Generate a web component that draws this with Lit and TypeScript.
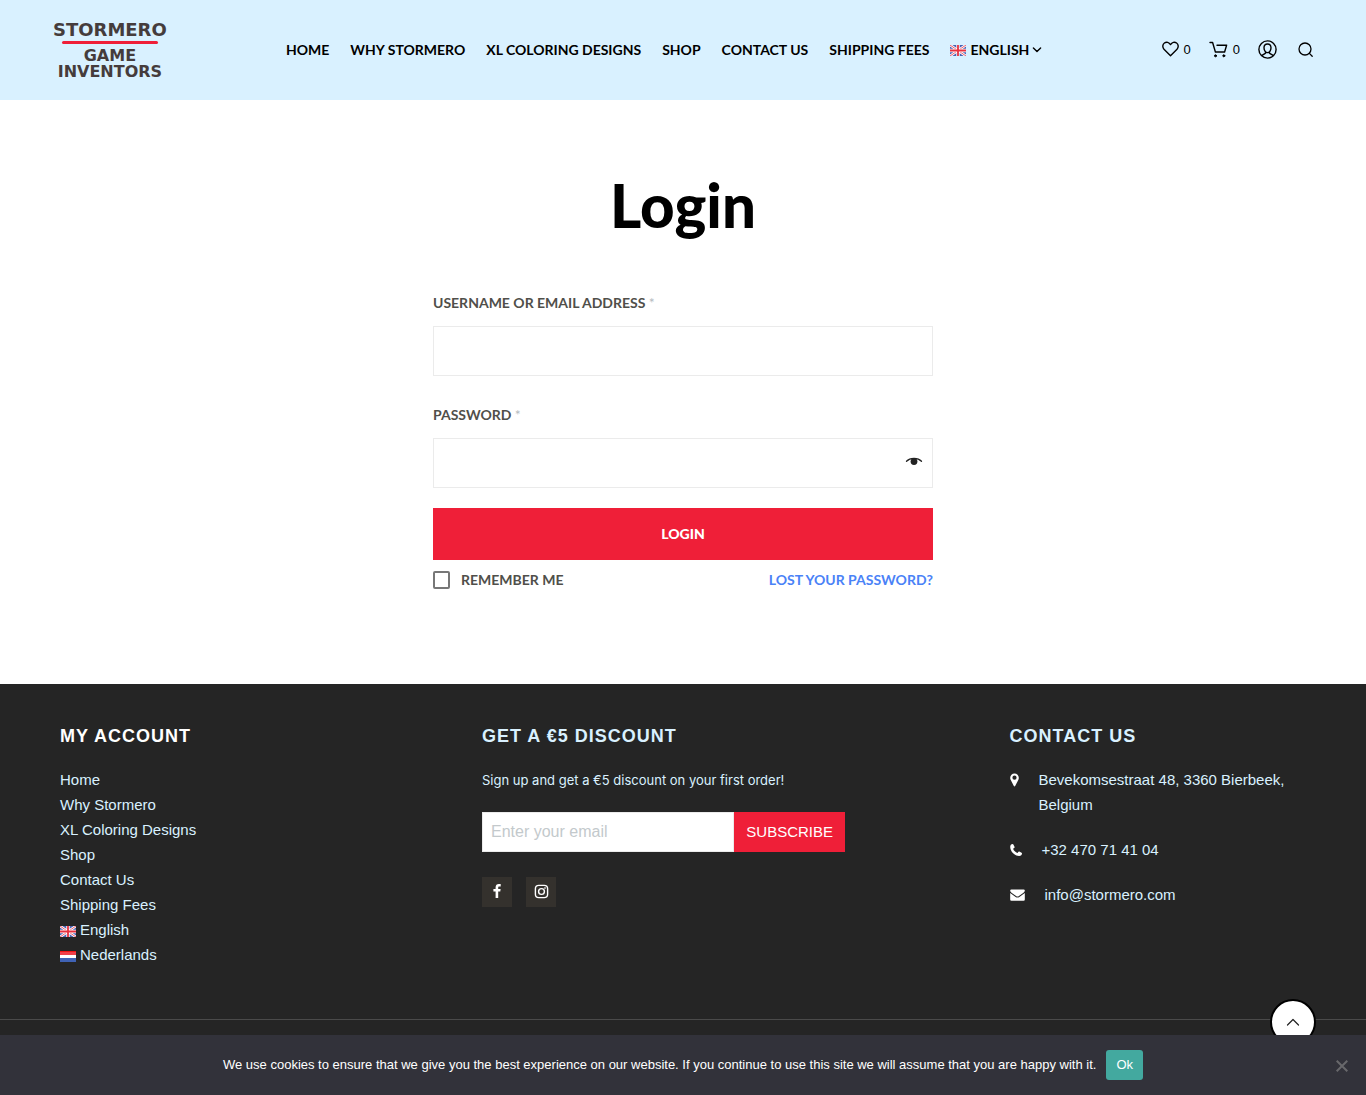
import { LitElement, html, css, svg } from "lit";
import { customElement, state } from "lit/decorators.js";

const flagUk = () => html`<svg class="flag" viewBox="0 0 16 11" aria-hidden="true">
  <rect width="16" height="11" fill="#4a62b4"></rect>
  <path d="M0 0L16 11M16 0L0 11" stroke="#fff" stroke-width="2.6"></path>
  <path d="M0 0L16 11M16 0L0 11" stroke="#ee5a68" stroke-width="1"></path>
  <path d="M8 0V11M0 5.5H16" stroke="#fff" stroke-width="3.4"></path>
  <path d="M8 0V11M0 5.5H16" stroke="#e8303f" stroke-width="1.8"></path>
</svg>`;

const flagNl = () => html`<svg class="flag" viewBox="0 0 16 11" aria-hidden="true">
  <rect width="16" height="11" fill="#fff"></rect>
  <rect width="16" height="4" fill="#f0404a"></rect>
  <rect width="16" height="1" fill="#f01414"></rect>
  <rect y="7" width="16" height="4" fill="#3f62b5"></rect>
</svg>`;

const menu = ["Home", "Why Stormero", "XL Coloring Designs", "Shop", "Contact Us", "Shipping Fees"];

const line = (w: number, h: number, cls: string, body: unknown) => html`<svg
  class=${cls}
  width=${w}
  height=${h}
  viewBox="0 0 ${w} ${h}"
  fill="none"
  stroke="currentColor"
  stroke-linecap="round"
  stroke-linejoin="round"
  aria-hidden="true"
>${body}</svg>`;

@customElement("app-root")
export class AppRoot extends LitElement {
  @state() private showPassword = false;
  @state() private cookieBar = true;

  static styles = css`
    :host {
      display: flex;
      flex-direction: column;
      min-height: 100vh;
      background: #fff;
      color: #000;
      font-family: "Liberation Sans", Arial, sans-serif;
      font-size: 15px;
    }
    * { box-sizing: border-box; }
    a { color: inherit; text-decoration: none; }
    h1, h2, p, ul { margin: 0; padding: 0; }
    ul { list-style: none; }
    svg { display: block; flex: none; }
    button { font: inherit; border: 0; padding: 0; cursor: pointer; background: none; color: inherit; }
    .flag { display: inline-block; width: 16px; height: 11px; vertical-align: -2px; margin-right: 4px; }

    .header {
      display: flex;
      align-items: center;
      justify-content: space-between;
      min-height: 100px;
      padding: 0 53px 2px;
      background: #d9f1ff;
    }
    .logo {
      display: flex;
      flex-direction: column;
      align-items: center;
      padding-top: 4px;
      color: #453c3c;
      font-family: "DejaVu Sans", sans-serif;
      font-size: 16px;
      font-weight: 700;
      line-height: 16px;
    }
    .logo-top { font-size: 18px; }
    .logo-rule { width: 96px; height: 3px; margin: 3px 0 4px; border-radius: 2px; background: #ef1f38; }
    .nav, .tools { display: flex; align-items: center; }
    .nav {
      gap: 21px;
      font-family: Lato, sans-serif;
      font-size: 14px;
      font-weight: 700;
      text-transform: uppercase;
      white-space: nowrap;
    }
    .lang { display: flex; align-items: center; }
    .lang .flag { margin-top: 3px; }
    .lang svg:last-child { margin: 2px 0 0 3px; }
    .tools { gap: 18px; font-size: 13px; }
    .tool { display: flex; align-items: center; gap: 5px; }
    .tool-search { padding-left: 3px; }

    .main { padding: 67px 20px 94px; }
    .title {
      font-family: Lato, sans-serif;
      font-size: 60px;
      line-height: 76px;
      font-weight: 900;
      text-align: center;
    }
    .form { max-width: 500px; margin: 51px auto 0; font-family: Lato, sans-serif; }
    .label {
      display: block;
      margin-bottom: 14px;
      color: #504f4a;
      font-size: 14px;
      line-height: 18px;
      font-weight: 700;
      text-transform: uppercase;
    }
    .req { color: #b5bcbf; font-weight: 400; }
    .field { display: flex; align-items: center; height: 50px; margin-bottom: 30px; border: 1px solid #ebebeb; }
    .field-last { margin-bottom: 20px; }
    .input { flex: 1; min-width: 0; height: 100%; padding: 0 12px; border: 0; outline: 0; background: none; font-size: 16px; }
    .eye { padding: 0 9px 4px; }
    .submit {
      width: 100%;
      height: 52px;
      padding-bottom: 2px;
      background: #ef1f38;
      color: #fff;
      font-size: 14px;
      font-weight: 900;
      text-transform: uppercase;
    }
    .row { display: flex; align-items: center; justify-content: space-between; margin-top: 10px; font-size: 14px; line-height: 20px; font-weight: 700; text-transform: uppercase; }
    .remember { display: flex; align-items: center; gap: 11px; color: #504f4a; }
    .check { appearance: none; width: 17px; height: 18px; margin: 0; border: 2px solid #777; border-radius: 2px; background: #fff; }
    .check:checked { background: #777; }
    .lost { color: #4a82f7; }

    .footer { flex: 1; background: #252525; color: #d9f1ff; padding-bottom: 75px; }
    .cols { display: grid; grid-template-columns: 4fr 5fr 3fr; padding: 39px 50px 52px; border-bottom: 1px solid #4a4a4a; }
    .col { min-width: 0; padding: 0 10px; line-height: 25px; }
    .head { margin-bottom: 18px; font-size: 18px; line-height: 26px; font-weight: 700; letter-spacing: 1px; text-transform: uppercase; }
    .head-white { color: #fff; }
    .promo { font-family: Inter, sans-serif; font-size: 13px; line-height: 27px; }
    .subscribe { display: flex; max-width: 363px; height: 40px; margin: 18px 0 25px; }
    .email { flex: 1; min-width: 0; padding: 0 8px; border: 1px solid #ebebeb; border-radius: 0; outline: 0; font: 16px "Liberation Sans", Arial, sans-serif; }
    .email::placeholder { color: #c3c9cc; opacity: 1; }
    .go { padding: 0 12px 1px; background: #ef1f38; color: #fff; }
    .social { display: flex; gap: 14px; color: #fff; }
    .social a { display: grid; place-items: center; width: 30px; height: 30px; padding-bottom: 2px; background: #34312d; }
    .contact { display: flex; flex-direction: column; gap: 20px; }
    .contact li { display: flex; align-items: flex-start; }
    .contact svg { margin: 6px 20px 0 0; color: #fff; }

    .totop {
      position: fixed;
      right: 50px;
      bottom: 50px;
      display: grid;
      place-items: center;
      width: 46px;
      height: 46px;
      border: 2px solid #000;
      border-radius: 50%;
      background: #fff;
      color: #222;
    }
    .cookie {
      position: fixed;
      inset: auto 0 0 0;
      display: flex;
      align-items: center;
      justify-content: center;
      gap: 10px;
      min-height: 60px;
      padding: 15px 50px;
      background: #32323a;
      color: #fff;
      font-size: 13px;
      line-height: 20px;
    }
    .cookie span { padding-bottom: 1px; }
    .ok { padding: 0 10px 1px; height: 30px; border-radius: 3px; background: #43a99f; }
    .close { position: absolute; right: 18px; top: 25px; color: #68686b; }
  `;

  private heart = line(17, 16, "", svg`<path stroke-width="1.4" d="M8.5 14.7L2 8.2C.2 6.2.5 3.3 2.4 2C4.5.6 7 1.2 8.5 3.6C10 1.2 12.5.6 14.6 2C16.5 3.3 16.8 6.2 15 8.2Z"></path>`);
  private cart = line(19, 17, "", svg`<path stroke-width="1.4" d="M1 1.5H3.6L6.4 11H15.6L17.6 4.2H8"></path><circle cx="6.5" cy="14.8" r="1" fill="currentColor" stroke-width="1"></circle><circle cx="14.8" cy="14.8" r="1" fill="currentColor" stroke-width="1"></circle>`);
  private user = line(19, 19, "", svg`<circle cx="9.5" cy="9.5" r="8.6" stroke-width="1.4"></circle><path stroke-width="1.4" d="M9.5 4C7.2 4 6 5.6 6 7.8S7.4 12.6 9.5 12.6S13 10 13 7.8S11.8 4 9.5 4ZM7.6 12L7.3 13.3L4 15.4M11.4 12L11.7 13.3L15 15.4"></path>`);
  private search = line(15, 15, "", svg`<circle cx="7" cy="7" r="6" stroke-width="1.3"></circle><path stroke-width="1.3" d="M11.4 11.4L14.2 14.2"></path>`);
  private chevron = line(10, 6, "", svg`<path stroke-width="1.4" d="M1.4 1L5 4.6L8.6 1"></path>`);

  render() {
    return html`
      <header class="header">
        <a class="logo" href="#" aria-label="Stormero Game Inventors">
          <span class="logo-top">STORMERO</span>
          <span class="logo-rule"></span>
          <span>GAME</span>
          <span>INVENTORS</span>
        </a>
        <nav class="nav">
          ${menu.map((m) => html`<a href="#">${m}</a>`)}
          <a class="lang" href="#">${flagUk()}English${this.chevron}</a>
        </nav>
        <div class="tools">
          <a class="tool" href="#" aria-label="Wishlist">${this.heart}<span>0</span></a>
          <a class="tool" href="#" aria-label="Cart">${this.cart}<span>0</span></a>
          <a class="tool" href="#" aria-label="Account">${this.user}</a>
          <button class="tool tool-search" aria-label="Search">${this.search}</button>
        </div>
      </header>

      <main class="main">
        <h1 class="title">Login</h1>
        <form class="form" @submit=${(e: Event) => e.preventDefault()}>
          <label class="label" for="user">Username or email address <span class="req">*</span></label>
          <div class="field"><input class="input" id="user" type="text" autocomplete="username" /></div>
          <label class="label" for="pass">Password <span class="req">*</span></label>
          <div class="field field-last">
            <input class="input" id="pass" type=${this.showPassword ? "text" : "password"} autocomplete="current-password" />
            <button class="eye" type="button" aria-label="Show password" @click=${() => (this.showPassword = !this.showPassword)}>
              <svg width="18" height="9" viewBox="0 0 18 9" aria-hidden="true">
                <path d="M1.5 4.2C5 .4 13 .4 16.5 4.2" fill="none" stroke="#222" stroke-width="1.3" stroke-linecap="round"></path>
                <circle cx="9" cy="4.6" r="3.4" fill="#222"></circle>
              </svg>
            </button>
          </div>
          <button class="submit" type="submit">Login</button>
          <div class="row">
            <label class="remember"><input class="check" type="checkbox" />Remember me</label>
            <a class="lost" href="#">Lost your password?</a>
          </div>
        </form>
      </main>

      <footer class="footer">
        <div class="cols">
          <section class="col">
            <h2 class="head head-white">My account</h2>
            <ul>
              ${menu.map((m) => html`<li><a href="#">${m}</a></li>`)}
              <li><a href="#">${flagUk()}English</a></li>
              <li><a href="#">${flagNl()}Nederlands</a></li>
            </ul>
          </section>
          <section class="col">
            <h2 class="head">Get a €5 discount</h2>
            <p class="promo">Sign up and get a €5 discount on your first order!</p>
            <form class="subscribe" @submit=${(e: Event) => e.preventDefault()}>
              <input class="email" type="email" placeholder="Enter your email" aria-label="Email" />
              <button class="go" type="submit">SUBSCRIBE</button>
            </form>
            <div class="social">
              <a href="#" aria-label="Facebook">
                <svg width="8" height="14" viewBox="0 0 8 14" fill="currentColor"><path d="M7.7.1V2.4H6.4C5.4 2.4 5.2 2.9 5.2 3.6V5.1H7.6L7.3 7.5H5.2V14H2.6V7.5H.4V5.1H2.6V3.3C2.6 1.2 3.9 0 5.8 0C6.7 0 7.5 .1 7.7 .1Z"></path></svg>
              </a>
              <a href="#" aria-label="Instagram">
                <svg width="15" height="15" viewBox="0 0 15 15" fill="none" stroke="currentColor" stroke-width="1.4"><rect x="1.4" y="1.4" width="12.2" height="12.2" rx="3.4"></rect><circle cx="7.5" cy="7.5" r="2.9"></circle><circle cx="11" cy="4" r=".5" fill="currentColor" stroke-width=".6"></circle></svg>
              </a>
            </div>
          </section>
          <section class="col">
            <h2 class="head">Contact us</h2>
            <ul class="contact">
              <li>
                <svg width="9" height="14" viewBox="0 0 9 14" fill="currentColor" aria-hidden="true"><path fill-rule="evenodd" d="M4.5 .4A4.3 4.3 0 0 0 .2 4.7C.2 5.3 .3 5.9 .5 6.4L3.7 12.8Q4.5 14 5.3 12.8L8.5 6.4C8.7 5.9 8.8 5.3 8.8 4.7A4.3 4.3 0 0 0 4.5 .4ZM4.5 2.6A2.1 2.1 0 1 1 4.5 6.8A2.1 2.1 0 1 1 4.5 2.6Z"></path></svg>
                <span>Bevekomsestraat 48, 3360 Bierbeek, Belgium</span>
              </li>
              <li>
                <svg width="12" height="14" viewBox="0 0 12 14" fill="currentColor" aria-hidden="true"><path d="M2.6 1.1C1.2 1.2.2 2.3.2 4C.4 8.6 4.6 12.8 9.2 13C10.9 13 11.9 12 12 10.6Q12 10 11.5 9.8L9.3 8.6Q8.8 8.4 8.5 8.8L7.4 10.1C5.5 9.4 3.8 7.7 3.1 5.8L4.4 4.7Q4.8 4.4 4.6 3.9L3.4 1.6Q3.1 1.1 2.6 1.1Z"></path></svg>
                <a href="tel:+32470714104">+32 470 71 41 04</a>
              </li>
              <li>
                <svg width="15" height="14" viewBox="0 0 16 14" fill="currentColor" aria-hidden="true"><path d="M1.5 1H14.5Q15.8 1 15.8 2.3C15.8 3.3 15 4 14.4 4.5L9.5 8Q8 9.2 6.5 8L1.6 4.5C1 4 .2 3.3 .2 2.3Q.2 1 1.5 1ZM.2 4.8L6 9Q8 10.4 10 9L15.8 4.8V11.7Q15.8 13 14.5 13H1.5Q.2 13 .2 11.7Z"></path></svg>
                <a href="mailto:info@stormero.com">info@stormero.com</a>
              </li>
            </ul>
          </section>
        </div>
      </footer>

      <a class="totop" href="#" aria-label="Back to top">
        ${line(14, 8, "", svg`<path stroke-width="1.2" d="M1.5 7L7 1.5L12.5 7"></path>`)}
      </a>
      ${this.cookieBar
        ? html`<div class="cookie" role="dialog" aria-label="Cookie notice">
            <span>We use cookies to ensure that we give you the best experience on our website. If you continue to use this site we will assume that you are happy with it.</span>
            <button class="ok" @click=${() => (this.cookieBar = false)}>Ok</button>
            <button class="close" aria-label="Close" @click=${() => (this.cookieBar = false)}>
              <svg width="12" height="12" viewBox="0 0 12 12" stroke="currentColor" stroke-width="2"><path d="M.7 .7L11.3 11.3M11.3 .7L.7 11.3"></path></svg>
            </button>
          </div>`
        : ""}
    `;
  }
}
